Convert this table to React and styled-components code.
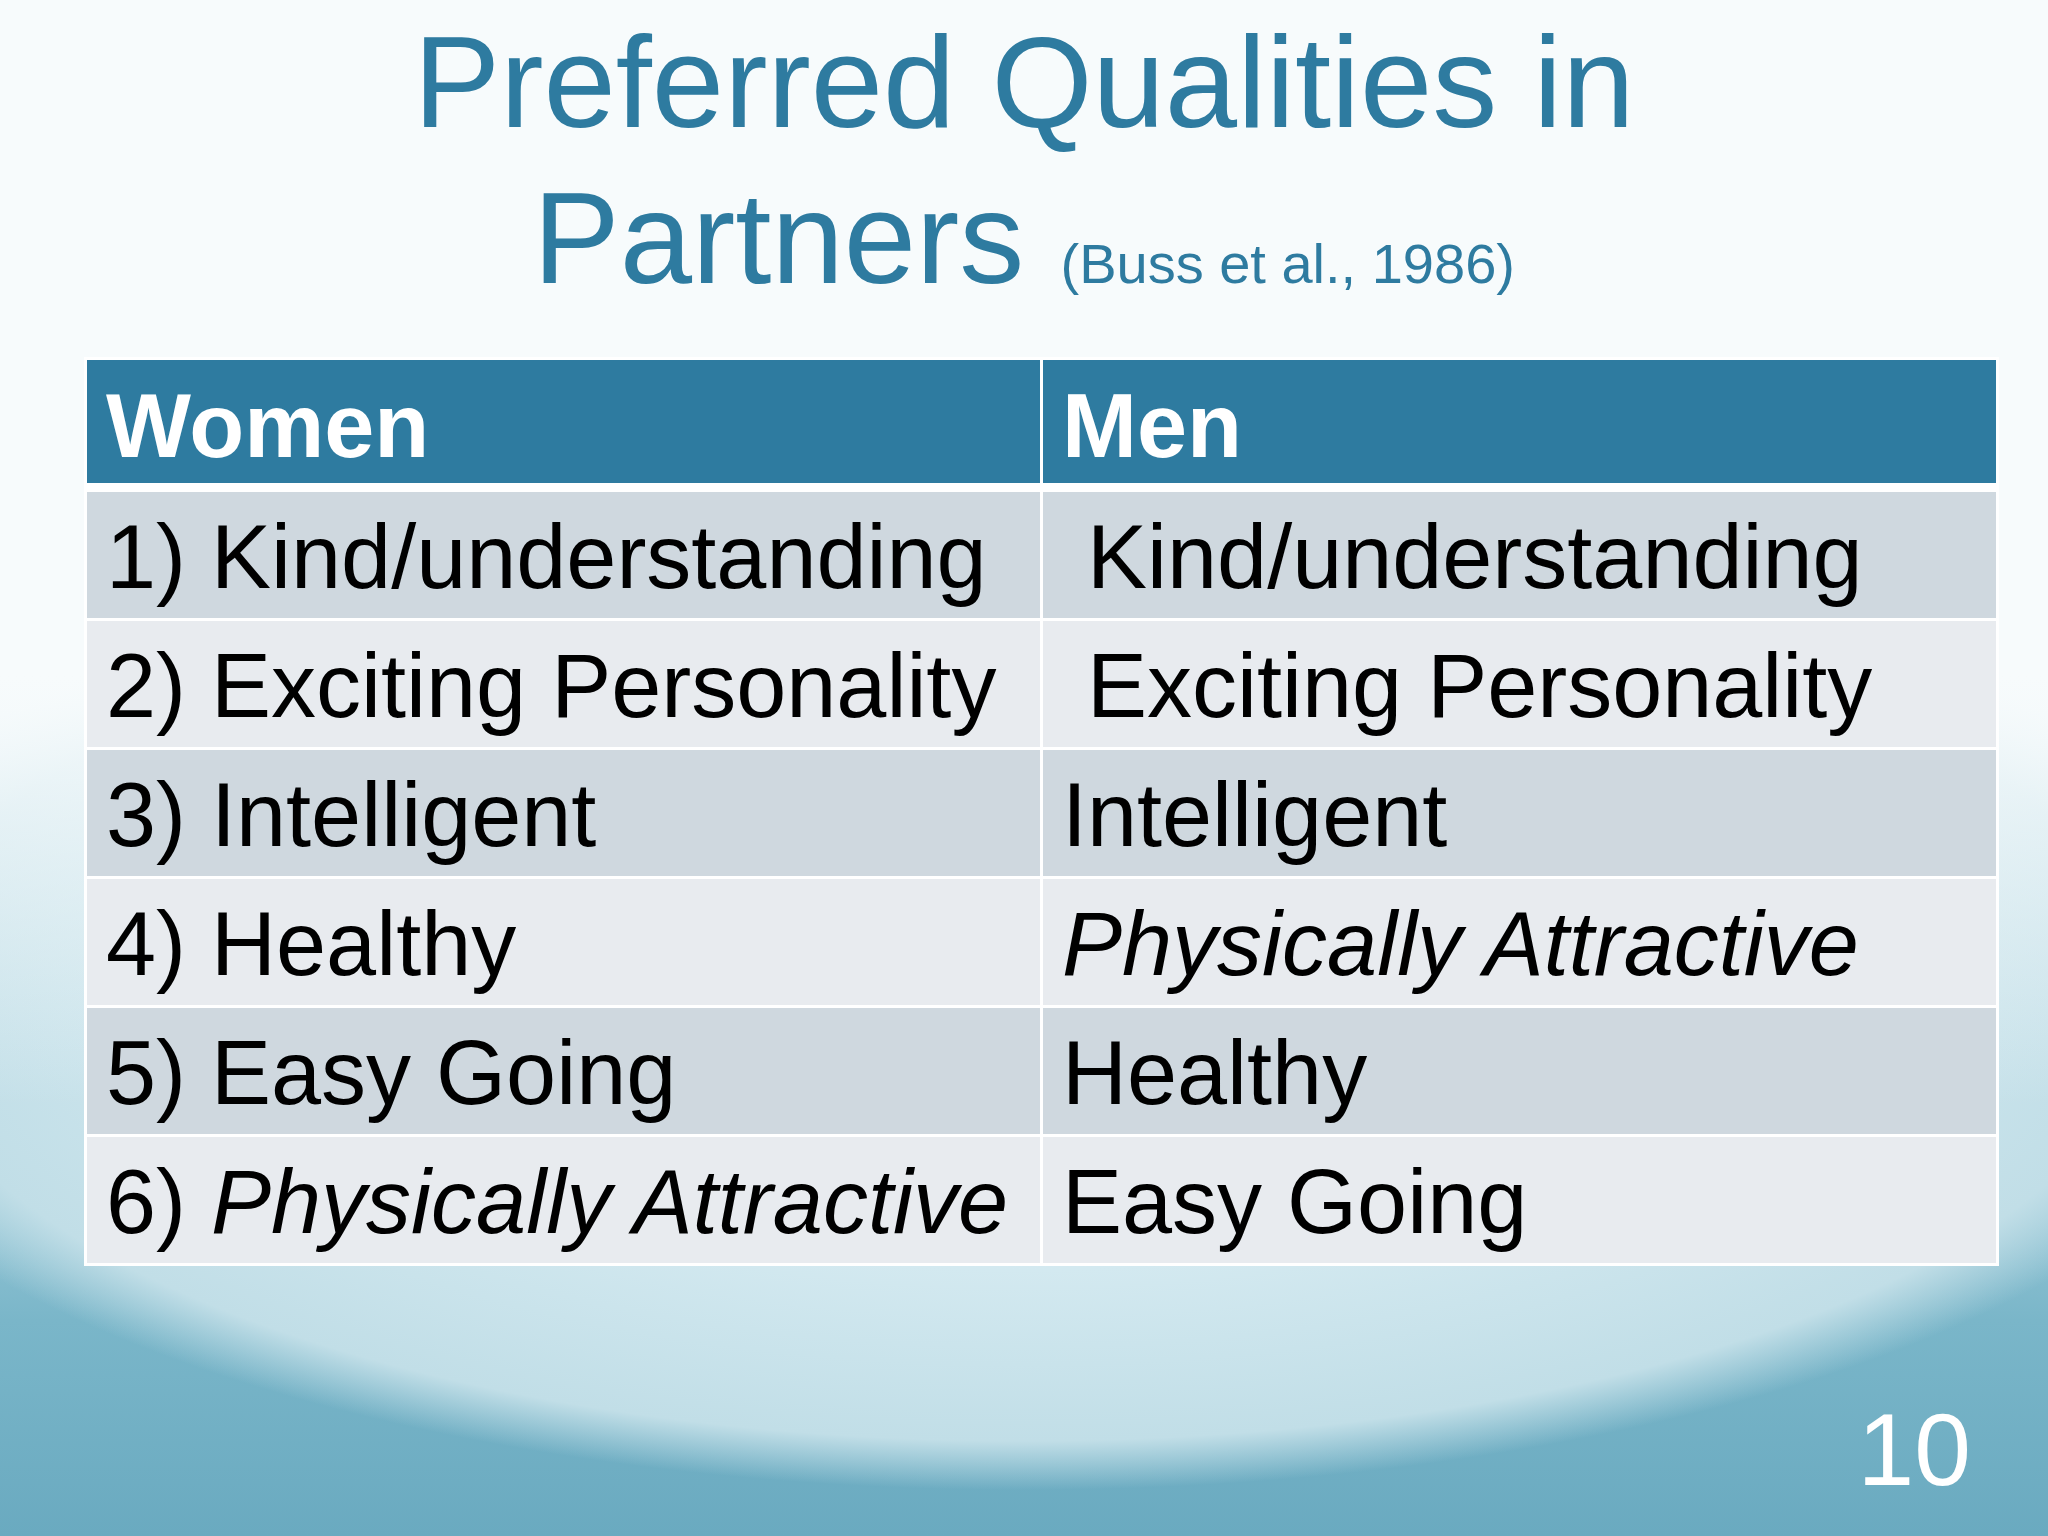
import React from "react";
import styled, { createGlobalStyle } from "styled-components";

const GlobalStyle = createGlobalStyle`
  html, body {
    margin: 0;
    padding: 0;
  }
  body {
    font-family: "Liberation Sans", Arial, sans-serif;
  }
`;

const Slide = styled.div`
  width: 2048px;
  height: 1536px;
  overflow: hidden;
  display: flex;
  flex-direction: column;
  align-items: center;
  background:
    linear-gradient(to bottom, #f7fbfc 0%, #f7fbfc 44%, rgba(247, 251, 252, 0) 72%),
    radial-gradient(
      ellipse 1250px 490px at 50% 1000px,
      #e6f3f7 0%,
      #d3e9f0 55%,
      #c1dee7 90%,
      rgba(193, 222, 231, 0) 100%
    ),
    linear-gradient(to bottom, #e4f1f5 45%, #a9d1de 72%, #7ab6c9 86%, #6aaac0 100%);
`;

const Title = styled.h1`
  margin: 0;
  padding-top: 4px;
  font-family: "Liberation Sans", Arial, sans-serif;
  font-weight: normal;
  font-size: 130px;
  line-height: 156px;
  color: #2e7ba0;
  text-align: center;
`;

const Citation = styled.span`
  font-size: 56px;
  line-height: 1;
`;

const Table = styled.div`
  align-self: flex-start;
  margin: 41px 0 0 84px;
  width: 1915px;
  box-sizing: border-box;
  padding: 3px;
  background: #ffffff;
  display: grid;
  grid-template-columns: 1fr 1fr;
  column-gap: 3px;
  row-gap: 3px;
`;

const HeadCell = styled.div`
  height: 123px;
  box-sizing: border-box;
  padding: 21px 0 0 19px;
  margin-bottom: 6px;
  background: #2e7ba0;
  color: #ffffff;
  font-weight: bold;
  font-size: 90px;
  line-height: 90px;
`;

const Cell = styled.div`
  height: 126px;
  box-sizing: border-box;
  padding: 20px 0 0 19px;
  background: ${(p) => (p.$odd ? "#cfd8df" : "#e8ebef")};
  color: #000000;
  font-size: 90px;
  line-height: 90px;
  white-space: pre;
`;

const Em = styled.span`
  font-style: italic;
`;

const Footer = styled.div`
  align-self: stretch;
  display: flex;
  justify-content: flex-end;
  margin-top: 133px;
  padding-right: 77px;
`;

const PageNumber = styled.div`
  font-size: 102px;
  line-height: 1;
  color: #ffffff;
`;

const rows = [
  ["1) Kind/understanding", " Kind/understanding"],
  ["2) Exciting Personality", " Exciting Personality"],
  ["3) Intelligent", "Intelligent"],
  ["4) Healthy", <Em key="pa">Physically Attractive</Em>],
  ["5) Easy Going", "Healthy"],
  [
    <>
      6) <Em>Physically Attractive</Em>
    </>,
    "Easy Going",
  ],
];

export default function App() {
  return (
    <>
      <GlobalStyle />
      <Slide>
        <Title>
          Preferred Qualities in
          <br />
          Partners <Citation>(Buss et al., 1986)</Citation>
        </Title>

        <Table>
          <HeadCell>Women</HeadCell>
          <HeadCell>Men</HeadCell>
          {rows.map((row, i) => (
            <React.Fragment key={i}>
              <Cell $odd={i % 2 === 0}>{row[0]}</Cell>
              <Cell $odd={i % 2 === 0}>{row[1]}</Cell>
            </React.Fragment>
          ))}
        </Table>

        <Footer>
          <PageNumber>10</PageNumber>
        </Footer>
      </Slide>
    </>
  );
}
